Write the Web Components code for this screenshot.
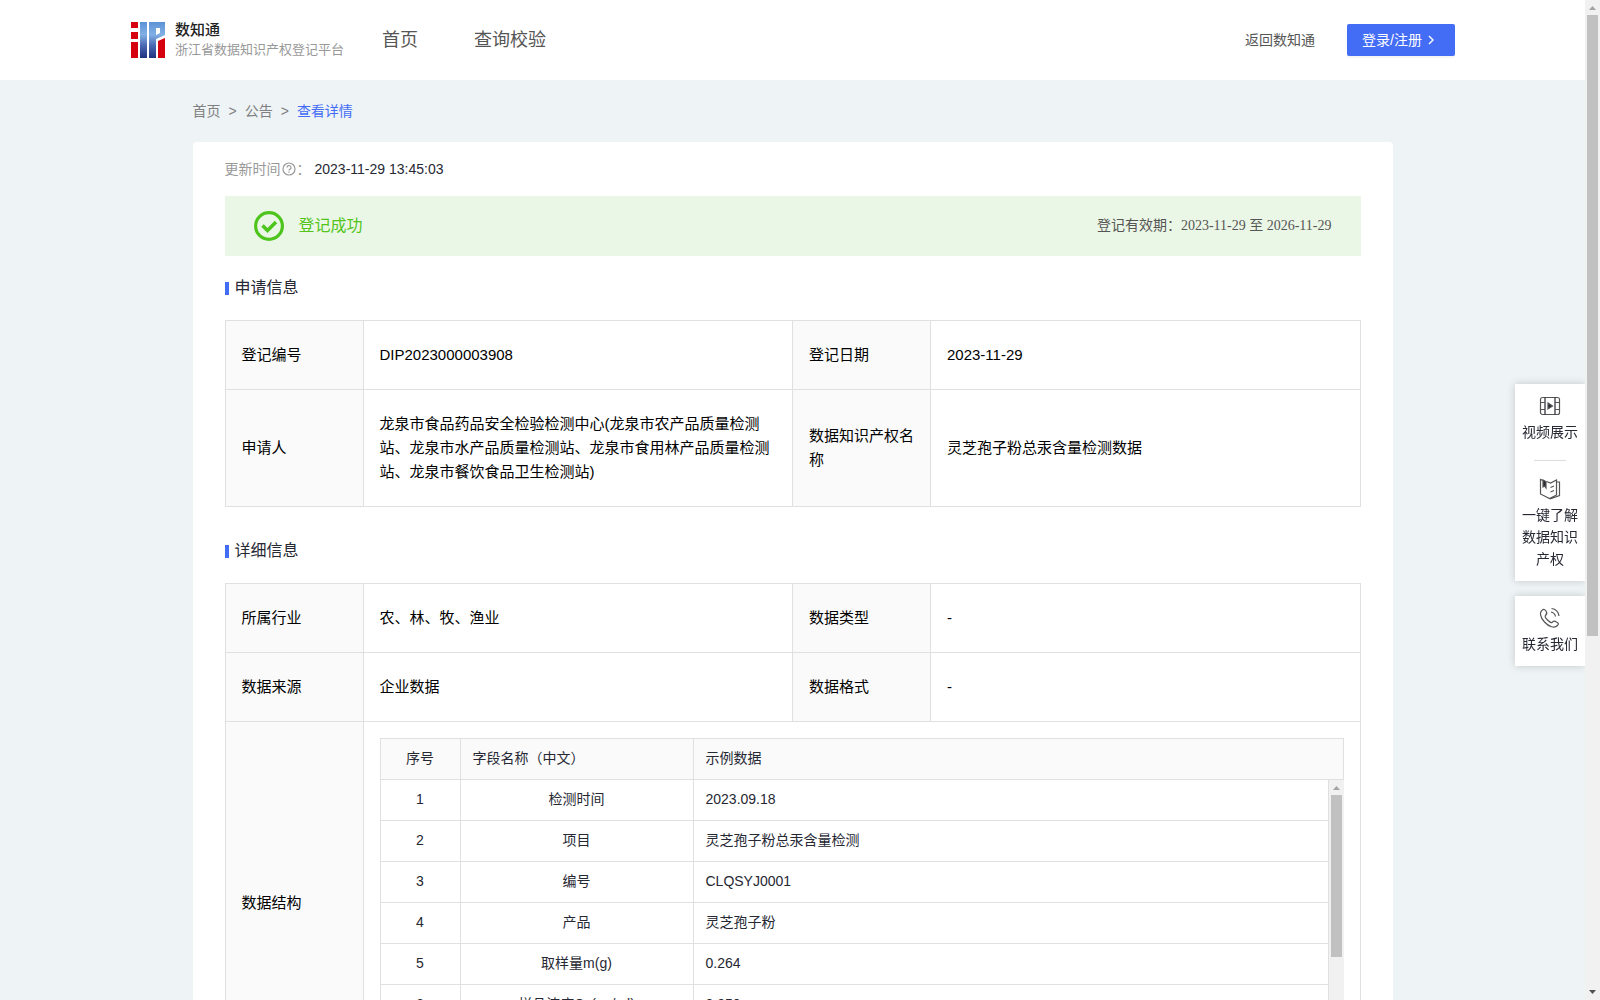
<!DOCTYPE html>
<html lang="zh-CN">
<head>
<meta charset="utf-8">
<title>浙江省数据知识产权登记平台</title>
<style>
    body {
        margin: 0;
        background: #eef3f6;
        color: #262833;
        font: 14px/22px "Liberation Sans", "Noto Sans CJK SC", sans-serif;
    }
</style>
</head>
<body>
<detail-page></detail-page>

<script>
(function () {
    // Small helper: clone a template into an open shadow root
    function define(name, html, setup) {
        const tmpl = document.createElement('template');
        tmpl.innerHTML = html;

        customElements.define(name, class extends HTMLElement {
            constructor() {
                super();
                this._shadowRoot = this.attachShadow({mode: "open"});
                this._shadowRoot.appendChild(tmpl.content.cloneNode(true));
            }

            connectedCallback() {
                if (setup) {
                    setup(this, this._shadowRoot);
                }
            }
        });
    }

    // Scrolling box with its own always visible bar; --thumb sets the thumb length
    define('scroll-area', `
    <style>
    :host { display: flex; }
    .view { flex: 1; min-width: 0; overflow-y: auto; scrollbar-width: none; }
    .bar { display: flex; flex-direction: column; flex: none; width: 15px; background: #f1f1f1; }
    .track { flex: 1; padding: 0 2px; }
    .thumb { height: var(--thumb, 64%); background: #c1c1c1; }
    svg { display: block; flex: none; width: 15px; height: 15px; fill: #505050; }
    .top { fill: #a3a3a3; }
    </style>
    <div class="view"><slot></slot></div>
    <div class="bar" aria-hidden="true">
        <svg class="top" viewBox="0 0 15 15"><path d="M4 10h7L7.500 6z"/></svg>
        <div class="track"><div class="thumb"></div></div>
        <svg viewBox="0 0 15 15"><path d="M4 5h7L7.500 9z"/></svg>
    </div>
    `, (host, root) => {
        const view = root.querySelector('.view');
        const track = root.querySelector('.track');
        const thumb = root.querySelector('.thumb');

        view.addEventListener('scroll', () => {
            const part = view.scrollTop / (view.scrollHeight - view.clientHeight);
            thumb.style.transform = `translateY(${part * (track.clientHeight - thumb.clientHeight)}px)`;
        });
    });

    define('site-logo', `
    <style>
    :host { display: block; }
    a { display: flex; align-items: center; gap: 10px; color: #222; text-decoration: none; }
    svg { display: block; width: 34px; height: 36px; }
    b, small { display: block; }
    b { font-size: 15px; line-height: 20px; font-weight: 500; }
    small { font-size: 13px; line-height: 20px; color: #999; }
    </style>
    <a href="#">
        <svg viewBox="0 0 34 36" aria-hidden="true">
            <defs>
                <linearGradient id="g" x1="0" y1="0" x2="0" y2="1">
                    <stop offset="0" stop-color="#5b92d6"/>
                    <stop offset=".35" stop-color="#82b0e4"/>
                    <stop offset=".65" stop-color="#4a69b4"/>
                    <stop offset="1" stop-color="#23337f"/>
                </linearGradient>
            </defs>
            <path fill="#d6000f" d="M0 0h7v6H0zM0 10h7v7H0zM0 20h7v16H0zM27 19l7-3v20h-7z"/>
            <path fill="url(#g)" fill-rule="evenodd" d="M9 0h7v36H9zM18 0h16v13l-9 4v19h-7zM25 6v7l4-2V6z"/>
        </svg>
        <span><b>数知通</b><small>浙江省数据知识产权登记平台</small></span>
    </a>
    `);

    define('site-header', `
    <style>
    :host { display: block; background: #fff; }
    header { display: flex; align-items: center; height: 80px; padding: 0 130px 0 131px; }
    nav { display: flex; gap: 56px; margin-left: 38px; }
    a { color: #555; text-decoration: none; }
    nav a { font-size: 18px; }
    .back { margin-left: auto; margin-right: 32px; }
    button {
        display: flex; align-items: center; gap: 4px;
        height: 32px; padding: 0 19px 0 15px;
        border: 0; border-radius: 2px;
        background: #446df6; color: #fff; font: inherit;
        box-shadow: 0 2px 0 rgba(0, 0, 0, .04);
        cursor: pointer;
    }
    </style>
    <header>
        <site-logo></site-logo>
        <nav><a href="#">首页</a><a href="#">查询校验</a></nav>
        <a class="back" href="#">返回数知通</a>
        <button type="button">登录/注册
            <svg width="10" height="12" viewBox="0 0 10 12" fill="none" stroke="#fff" stroke-width="1.4" aria-hidden="true"><path d="M3 2l4 4-4 4"/></svg>
        </button>
    </header>
    `);

    define('bread-crumb', `
    <style>
    :host { display: block; padding: 20px 0; }
    nav { display: flex; gap: 8px; color: #808080; }
    a { color: inherit; text-decoration: none; }
    .current { color: #446df6; }
    </style>
    <nav><a href="#">首页</a><span>&gt;</span><a href="#">公告</a><span>&gt;</span><a class="current" href="#">查看详情</a></nav>
    `);

    define('status-banner', `
    <style>
    :host {
        display: flex; align-items: center; justify-content: space-between;
        height: 60px; padding: 0 29px;
        background: #ebf7e6; color: #555;
    }
    div { display: flex; align-items: center; gap: 15px; font-size: 16px; color: #52c41a; }
    p { margin: 0; font-family: "Liberation Serif", "Noto Sans CJK SC", serif; }
    </style>
    <div>
        <svg width="30" height="30" viewBox="0 0 30 30" fill="none" stroke="#4ec51c" aria-hidden="true">
            <circle cx="15" cy="15" r="13.4" stroke-width="3.2"/>
            <path d="M8.500 14.500l5 5 8.500-8.500" stroke-width="3.600"/>
        </svg>
        <slot></slot>
    </div>
    <p><slot name="period"></slot></p>
    `);

    define('section-title', `
    <style>
    :host { display: flex; align-items: center; gap: 6px; }
    :host::before { content: ""; width: 4px; height: 13px; background: #446df6; }
    h2 { margin: 0; font-size: 16px; line-height: 24px; font-weight: 400; }
    </style>
    <h2><slot></slot></h2>
    `);

    define('field-table', `
    <style>
    :host { display: block; }
    scroll-area { height: 287px; --thumb: 63%; }
    table { width: 100%; table-layout: fixed; border-collapse: separate; border-spacing: 0; border-left: 1px solid #e0e0e0; }
    .head { border-top: 1px solid #e0e0e0; }
    th, td {
        height: 38px; padding: 0 12px 2px;
        border-right: 1px solid #e0e0e0; border-bottom: 1px solid #e0e0e0;
        font-weight: 400; text-align: left;
    }
    th { background: #fafafa; }
    th:first-child, td:first-child, td:nth-child(2) { text-align: center; }
    .no { width: 80px; }
    .name { width: 233px; }
    </style>
    <table class="head">
        <colgroup><col class="no"><col class="name"><col></colgroup>
        <thead><tr><th>序号</th><th>字段名称（中文）</th><th>示例数据</th></tr></thead>
    </table>
    <scroll-area>
        <table>
            <colgroup><col class="no"><col class="name"><col></colgroup>
            <tbody></tbody>
        </table>
    </scroll-area>
    `, (host, root) => {
        const rows = [
            ['检测时间', '2023.09.18'],
            ['项目', '灵芝孢子粉总汞含量检测'],
            ['编号', 'CLQSYJ0001'],
            ['产品', '灵芝孢子粉'],
            ['取样量m(g)', '0.264'],
            ['样品浓度Cx(ug/ml)', '0.350'],
            ['', ''], ['', ''], ['', ''], ['', ''], ['', '']
        ];
        root.querySelector('tbody').innerHTML = rows.map((row, i) =>
            `<tr><td>${i + 1}</td><td>${row[0]}</td><td>${row[1]}</td></tr>`).join('');
    });

    define('side-tools', `
    <style>
    :host { position: fixed; right: 15px; top: 384px; display: flex; flex-direction: column; gap: 15px; width: 70px; clip-path: inset(-10px 0 -10px -10px); }
    .box { padding: 11px 6px; background: #fff; box-shadow: 0 0 8px rgba(0, 0, 0, .18); }
    a { display: flex; flex-direction: column; align-items: center; gap: 4px; color: #262833; text-align: center; text-decoration: none; }
    svg { display: block; width: 22px; height: 22px; fill: none; stroke: #555; stroke-width: 1.200; }
    hr { width: 32px; margin: 17px auto; border: 0; border-top: 1px solid #ddd; }
    </style>
    <div class="box">
        <a href="#">
            <svg viewBox="0 0 22 22" aria-hidden="true"><rect x="1.500" y="2.500" width="19" height="17" rx="2"/><path d="M6 2.500v17M16 2.500v17" stroke="#262833"/><path d="M1.500 7.500H6M1.500 14.500H6M16 7.500h4.500M16 14.500h4.500"/><path d="M9 8l4.500 3L9 14z" fill="#262833"/></svg>
            <span>视频展示</span>
        </a>
        <hr>
        <a href="#">
            <svg viewBox="0 0 22 22" aria-hidden="true"><path d="M4 2.500L1.500 1.500v14.500l9 4.500L17.500 17V2l-6 3-4-1.500M17.500 4h3v13.500l-9.500 3.500"/><path d="M4 2v7l1.500-1L7 10V3.500z" fill="#262833"/><path d="M11.500 9.500l3.500-1.500M11.500 14l3.500-1.500"/></svg>
            <span>一键了解数据知识产权</span>
        </a>
    </div>
    <div class="box">
        <a href="#">
            <svg viewBox="0 0 22 22" aria-hidden="true"><path d="M4 2.500C0 5 1 10 5.500 15s10 6.500 13 3.500c1.500-1.500 1-2.500-1-3.500-2.500-1.500-3-1-4.500.5-1 .5-2.500-.5-4.500-2.500S5.500 9.500 6.500 8.500C8 7 8.500 6 7 4S5 2 4 2.500zM12 5c2.500.5 4 2 4.500 4.500M12.500 1.500c4 .5 7 3.500 7.500 7.500"/></svg>
            <span>联系我们</span>
        </a>
    </div>
    `);

    define('detail-page', `
    <style>
    :host { display: block; }
    .page { height: 100vh; --thumb: 64%; }
    main { max-width: 1200px; margin: 0 auto; padding-bottom: 60px; }
    article { padding: 16px 32px 60px; border-radius: 4px; background: #fff; }
    .updated { display: flex; align-items: center; gap: 4px; margin: 0 0 16px; }
    .updated span { display: flex; align-items: center; color: #999; }
    .updated svg { margin: 0 1px; }
    section-title { margin: 20px 0; }
    table { width: 100%; border-collapse: collapse; table-layout: fixed; margin-bottom: 32px; color: #000; font-size: 15px; line-height: 24px; }
    th, td { padding: 22px 16px; border: 1px solid #e0e0e0; font-weight: 400; text-align: left; }
    th { background: #fafafa; }
    .label { width: 138px; }
    .nested { padding: 16px; color: #262833; font-size: 14px; line-height: 22px; }
    </style>
    <scroll-area class="page">
        <site-header></site-header>
        <main>
            <bread-crumb></bread-crumb>
            <article>
                <p class="updated">
                    <span>更新时间<svg width="14" height="14" viewBox="0 0 14 14" fill="none" stroke="#999" stroke-width="1.200" aria-hidden="true"><circle cx="7" cy="7" r="6"/><path d="M5 5.600a2 2 0 1 1 2.700 1.800c-.5.200-.7.500-.7 1.100M7 9.500v1.200"/></svg>：</span>
                    <time>2023-11-29 13:45:03</time>
                </p>
                <status-banner>登记成功<span slot="period">登记有效期：2023-11-29 至 2026-11-29</span></status-banner>
                <section-title>申请信息</section-title>
                <table>
                    <colgroup><col class="label"><col><col class="label"><col></colgroup>
                    <tr><th>登记编号</th><td>DIP2023000003908</td><th>登记日期</th><td>2023-11-29</td></tr>
                    <tr><th>申请人</th><td>龙泉市食品药品安全检验检测中心(龙泉市农产品质量检测站、龙泉市水产品质量检测站、龙泉市食用林产品质量检测站、龙泉市餐饮食品卫生检测站)</td><th>数据知识产权名称</th><td>灵芝孢子粉总汞含量检测数据</td></tr>
                </table>
                <section-title>详细信息</section-title>
                <table>
                    <colgroup><col class="label"><col><col class="label"><col></colgroup>
                    <tr><th>所属行业</th><td>农、林、牧、渔业</td><th>数据类型</th><td>-</td></tr>
                    <tr><th>数据来源</th><td>企业数据</td><th>数据格式</th><td>-</td></tr>
                    <tr><th>数据结构</th><td class="nested" colspan="3"><field-table></field-table></td></tr>
                </table>
            </article>
        </main>
    </scroll-area>
    <side-tools></side-tools>
    `);
})();
</script>
</body>
</html>
